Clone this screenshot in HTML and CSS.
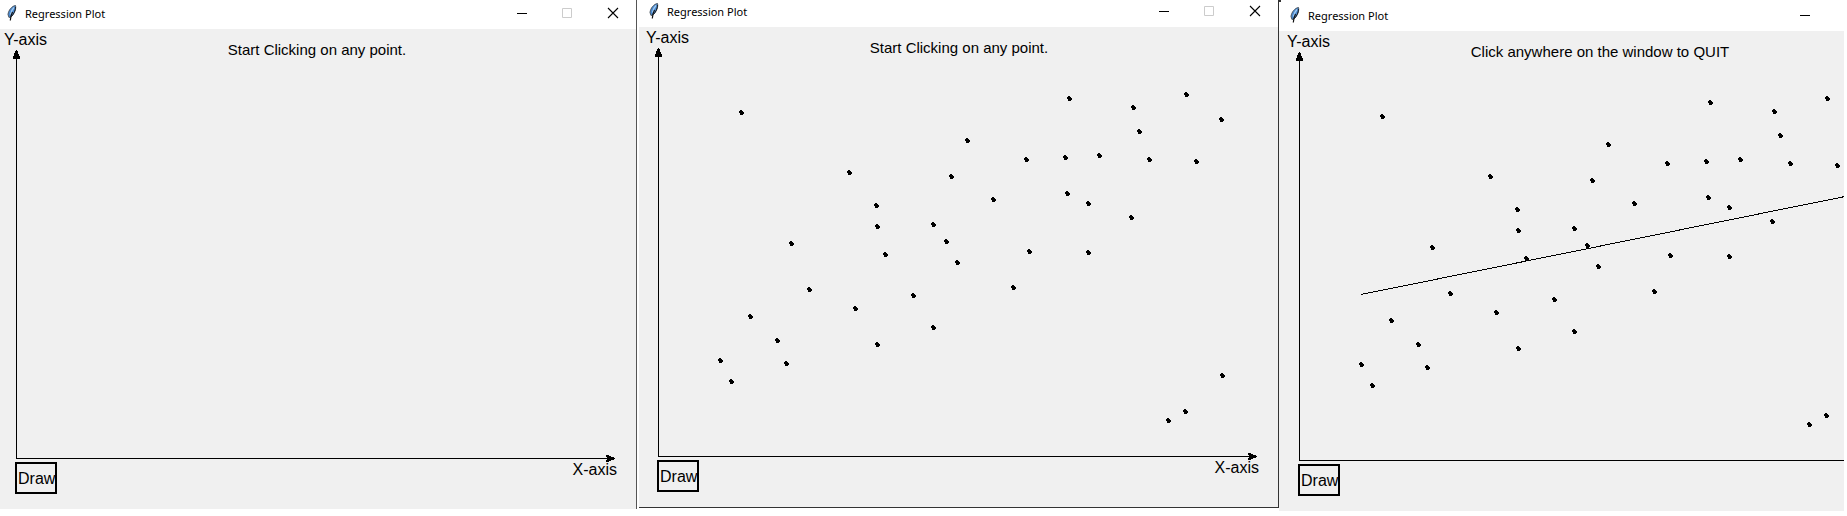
FILE: index.html
```html
<!DOCTYPE html>
<html lang="en">
<head>
<meta charset="utf-8">
<title>Regression Plot</title>
<link rel="stylesheet" href="styles.css">
</head>
<body>
<svg class="defs" aria-hidden="true">
  <defs>
    <symbol id="feather" viewBox="0 0 10 16">
      <path d="M8.500 0.500C5 1 1.500 5 1 9.500L2 12.500L4.500 11.500C7 9 9.500 4 8.500 0.500Z" fill="#4a8ad0" stroke="#4b5560"/>
      <path d="M7 2.500C5 4.500 4 7 3.500 9.500" fill="none" stroke="#a4cdf4" stroke-width="1.300"/>
      <path d="M8.500 2C8.500 6 6.500 9 4.500 11.500" fill="none" stroke="#1a222c" stroke-width="1"/>
      <path d="M5.500 7C4 10 3.500 12 3.300 15.500" fill="none" stroke="#111" stroke-width="1.200"/>
    </symbol>
    <symbol id="minimize" viewBox="0 0 46 29"><path d="M19 13h10v1h-10z"/></symbol>
    <symbol id="maximize" viewBox="0 0 46 29"><path d="M18.500 8.500h9v9h-9z" fill="none" stroke="#ccc"/></symbol>
    <symbol id="close" viewBox="0 0 46 29"><path d="M18 8l10 10M28 8l-10 10" fill="none" stroke="#000" stroke-width="1.100"/></symbol>
    <marker id="dot" markerUnits="userSpaceOnUse" markerWidth="5" markerHeight="5" refX="2" refY="2" viewBox="0 0 5 5">
      <path d="M1 0h2v1h1v1h1v2h-1v1h-3v-2h-1v-2h1z" shape-rendering="crispEdges"/>
    </marker>
    <g id="axes" shape-rendering="crispEdges">
      <path d="M16 22h1v407h590v1h-591z"/>
      <path d="M16 21h1l3 7v2h-7v-2z"/>
      <path d="M615 429v1l-7 3h-2v-2h1v-3h-1v-2h2z"/>
    </g>
    <path id="points" marker-start="url(#dot)" marker-mid="url(#dot)" marker-end="url(#dot)" fill="none" d="M99 85L325 113L207 145L309 149L351 172L234 178L235 199L291 197L149 216L304 214L243 227L315 235L167 262L271 268L213 281L108 289L135 313L291 300L235 317L78 333L144 336L89 354L427 71L491 80L544 67L579 92L497 104L384 132L423 130L457 128L507 132L554 134L425 166L446 176L489 190L387 224L446 225L371 260L580 348L543 384L526 393"/>
  </defs>
</svg>
<main class="desktop">
  <section class="window window-first">
    <header class="titlebar">
      <svg class="app-icon"><use href="#feather"/></svg>
      <h1 class="title">Regression Plot</h1>
      <button class="control" aria-label="Minimize"><svg><use href="#minimize"/></svg></button>
      <button class="control" aria-label="Maximize" disabled><svg><use href="#maximize"/></svg></button>
      <button class="control" aria-label="Close"><svg><use href="#close"/></svg></button>
    </header>
    <div class="canvas">
      <svg class="plot" viewBox="0 0 636 480"><use href="#axes"/></svg>
      <div class="heading"><span class="y-label">Y-axis</span><p class="message">Start Clicking on any point.</p></div>
      <div class="footing"><button class="draw">Draw</button><span class="x-label">X-axis</span></div>
    </div>
  </section>
  <section class="window window-second">
    <header class="titlebar">
      <svg class="app-icon"><use href="#feather"/></svg>
      <h1 class="title">Regression Plot</h1>
      <button class="control" aria-label="Minimize"><svg><use href="#minimize"/></svg></button>
      <button class="control" aria-label="Maximize" disabled><svg><use href="#maximize"/></svg></button>
      <button class="control" aria-label="Close"><svg><use href="#close"/></svg></button>
    </header>
    <div class="canvas">
      <svg class="plot" viewBox="0 0 636 480"><use href="#axes"/><use href="#points"/></svg>
      <div class="heading"><span class="y-label">Y-axis</span><p class="message">Start Clicking on any point.</p></div>
      <div class="footing"><button class="draw">Draw</button><span class="x-label">X-axis</span></div>
    </div>
  </section>
  <section class="window window-third">
    <header class="titlebar">
      <svg class="app-icon"><use href="#feather"/></svg>
      <h1 class="title">Regression Plot</h1>
      <button class="control control-lone" aria-label="Minimize"><svg><use href="#minimize"/></svg></button>
    </header>
    <div class="canvas">
      <svg class="plot" viewBox="0 0 636 480"><use href="#axes"/><use href="#points"/><path class="fit" d="M78 263.500L562 165.500"/></svg>
      <div class="heading"><span class="y-label">Y-axis</span><p class="message">Click anywhere on the window to QUIT</p></div>
      <div class="footing"><button class="draw">Draw</button></div>
    </div>
  </section>
</main>
</body>
</html>
```
FILE: styles.css
```css
* {
  box-sizing: border-box;
}

body {
  margin: 0;
  background: #fff;
  color: #000;
  font-family: "Liberation Sans", Arial, sans-serif;
  font-size: 16px;
  line-height: 18px;
}

.defs {
  position: absolute;
  width: 0;
  height: 0;
}

.desktop {
  display: grid;
  grid-template-columns: 639fr 640fr 565fr;
  align-items: start;
  padding-right: 3px;
  overflow: hidden;
}

.window {
  position: relative;
  min-width: 0;
  overflow: hidden;
  background: #f0f0f0;
}

.window-first {
  margin-right: 2px;
  border-right: 1px solid #555;
}

.window-second {
  border-right: 1px solid #333;
  border-bottom: 1px solid #333;
}

.window-second .titlebar,
.window-second .canvas {
  padding-left: 3px;
}

.window-third .titlebar,
.window-third .canvas {
  padding-left: 4px;
}

/* corner of the frame showing behind the title bar */
.window-third::before {
  content: "";
  position: absolute;
  top: 0;
  left: 0;
  width: 2px;
  height: 2px;
  background: #333;
}

.titlebar {
  display: flex;
  align-items: flex-end;
  height: 29px;
  background: #fff;
}

.window-second .titlebar {
  height: 27px;
}

.window-third .titlebar {
  height: 31px;
}

.app-icon {
  width: 10px;
  height: 16px;
  margin: 0 8px 8px 7px;
}

.title {
  flex: 1;
  margin: 0 0 6px;
  font-family: "Noto Sans", "Open Sans", sans-serif;
  font-size: 11px;
  font-weight: 400;
  line-height: 18px;
}

.control {
  flex: none;
  width: 46px;
  height: 29px;
  padding: 0;
  border: 0;
  background: none;
}

.control-lone {
  margin-right: 17px;
}

.control svg {
  display: block;
  width: 46px;
  height: 29px;
}

.canvas {
  display: grid;
  grid-template-columns: 636px;
  grid-template-rows: auto 1fr auto;
  height: 480px;
}

.plot {
  grid-area: 1 / 1 / 4 / 2;
  width: 636px;
  height: 480px;
}

.fit {
  fill: none;
  stroke: #000;
  shape-rendering: crispEdges;
}

.heading {
  grid-area: 1 / 1;
  display: grid;
  grid-template-columns: 1fr;
  padding-top: 2px;
}

.y-label {
  grid-area: 1 / 1;
  padding-left: 4px;
}

.message {
  grid-area: 1 / 1;
  margin: 0;
  padding-top: 10px;
  padding-right: 2px;
  font-size: 15px;
  text-align: center;
}

.footing {
  grid-area: 3 / 1;
  display: flex;
  align-items: flex-start;
  justify-content: space-between;
  padding: 0 19px 15px 15px;
}

.draw {
  width: 42px;
  height: 32px;
  padding: 2px 0 0 1px;
  border: 2px solid #000;
  background: none;
  color: inherit;
  font: inherit;
}

.x-label {
  line-height: 16px;
}
```
